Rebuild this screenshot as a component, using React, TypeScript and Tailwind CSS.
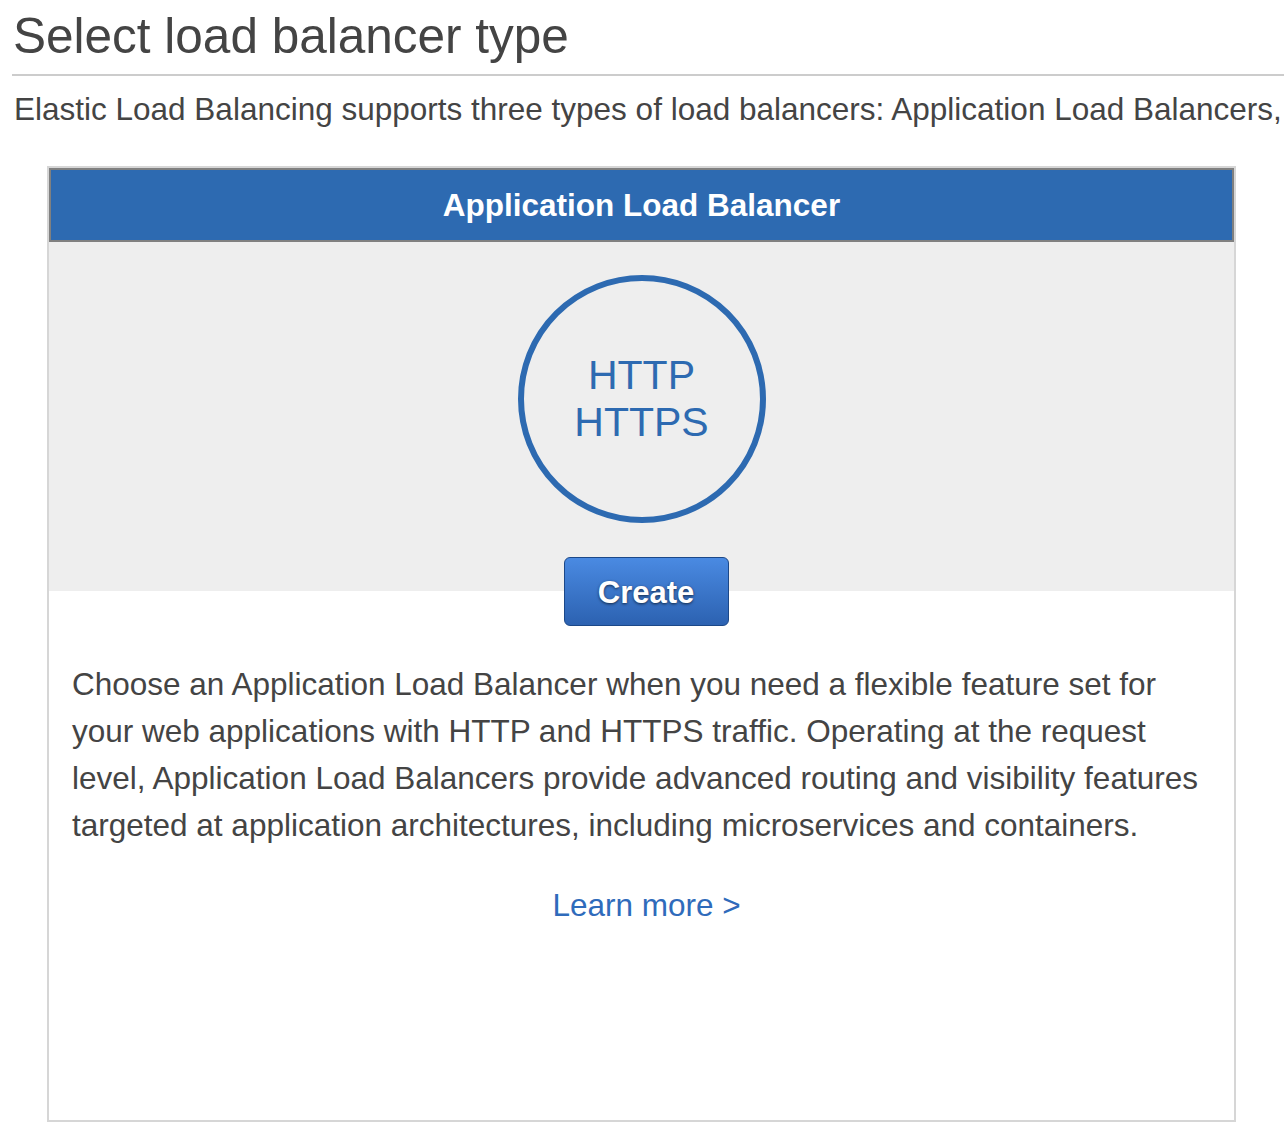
export default function App() {
  return (
    <div className="w-[1284px] h-[1147px] overflow-hidden bg-white pl-3 pt-2 font-['Liberation_Sans',Arial,sans-serif] text-[#444]">
      {/* heading */}
      <h1 className="text-[49.5px] leading-[55px] pl-[1px] whitespace-nowrap">Select load balancer type</h1>
      <div className="mt-[11px] h-[2px] w-[1300px] bg-[#cccccc]" />

      <p className="mt-[10px] pl-[2px] text-[31.5px] leading-[47px] whitespace-nowrap">
        Elastic Load Balancing supports three types of load balancers: Application Load Balancers,
      </p>

      <TypeCard />
    </div>
  )
}

function TypeCard() {
  return (
    <div className="ml-[35px] mt-[33px] w-[1189px] h-[956px] border-2 border-[#d6d6d6] bg-white flex flex-col">
      <div className="h-[74px] border-2 border-[#808080] bg-[#2d6ab1] flex items-center justify-center">
        <h2 className="text-white font-bold text-[31.5px] leading-[35px]">Application Load Balancer</h2>
      </div>

      <div className="bg-[#eeeeee] pt-[33px] flex flex-col items-center">
        <div className="w-[248px] h-[248px] rounded-full border-[6px] border-[#2d6ab1] flex flex-col items-center justify-center text-[#2d6ab1] text-[41px] leading-[47px]">
          <span>HTTP</span>
          <span>HTTPS</span>
        </div>

        <button className="relative z-10 ml-[9px] mt-[34px] -mb-[35px] w-[165px] h-[69px] pt-[3px] rounded-[6px] border-[1.5px] border-[#1c4888] bg-gradient-to-b from-[#4a8ae2] to-[#2c62b1] text-white font-bold text-[31px] [text-shadow:0_1px_3px_rgba(0,0,0,0.65)]">
          Create
        </button>
      </div>

      <div className="pt-[70px] px-[23px] text-[31.5px] leading-[47px] text-[#444]">
        <p>
          Choose an Application Load Balancer when you need a flexible feature set for your web applications with HTTP and HTTPS traffic. Operating at the request level, Application Load Balancers provide advanced routing and visibility features targeted at application architectures, including microservices and containers.
        </p>
        <div className="mt-[33px] pl-[10px] text-center">
          <a href="#" className="text-[#2f6bbb]">Learn more &gt;</a>
        </div>
      </div>
    </div>
  )
}
